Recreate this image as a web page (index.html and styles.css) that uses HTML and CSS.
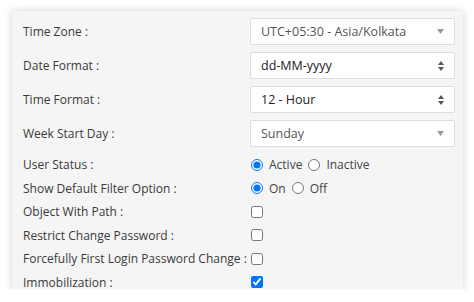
FILE: index.html
```html
<!DOCTYPE html>
<html>
<head>
<meta charset="utf-8">
<link rel="stylesheet" href="styles.css">
</head>
<body>
<div class="card">
  <div class="row sel-row">
    <div class="label">Time Zone :</div>
    <div class="select s2"><span>UTC+05:30 - Asia/Kolkata</span>
      <svg class="tri" width="7" height="5" viewBox="0 0 7 5"><path d="M0 0H7L3.5 5Z" fill="#999"/></svg></div>
  </div>
  <div class="row sel-row">
    <div class="label">Date Format :</div>
    <div class="select native"><span>dd-MM-yyyy</span>
      <svg class="dbl" width="6" height="10" viewBox="0 0 6 10"><path d="M3 0L6 4H0Z M0 6H6L3 10Z" fill="#555"/></svg></div>
  </div>
  <div class="row sel-row">
    <div class="label">Time Format :</div>
    <div class="select native"><span>12 - Hour</span>
      <svg class="dbl" width="6" height="10" viewBox="0 0 6 10"><path d="M3 0L6 4H0Z M0 6H6L3 10Z" fill="#555"/></svg></div>
  </div>
  <div class="row sel-row">
    <div class="label">Week Start Day :</div>
    <div class="select s2"><span>Sunday</span>
      <svg class="tri" width="7" height="5" viewBox="0 0 7 5"><path d="M0 0H7L3.5 5Z" fill="#999"/></svg></div>
  </div>
  <div class="row small">
    <div class="label">User Status :</div>
    <div class="opts">
      <label class="opt"><input type="radio" name="us" checked>Active</label>
      <label class="opt"><input type="radio" name="us">Inactive</label>
    </div>
  </div>
  <div class="row small">
    <div class="label">Show Default Filter Option :</div>
    <div class="opts">
      <label class="opt"><input type="radio" name="fo" checked>On</label>
      <label class="opt"><input type="radio" name="fo">Off</label>
    </div>
  </div>
  <div class="row small">
    <div class="label">Object With Path :</div>
    <div class="opts"><input type="checkbox"></div>
  </div>
  <div class="row small">
    <div class="label">Restrict Change Password :</div>
    <div class="opts"><input type="checkbox"></div>
  </div>
  <div class="row small">
    <div class="label">Forcefully First Login Password Change :</div>
    <div class="opts"><input type="checkbox"></div>
  </div>
  <div class="row small">
    <div class="label">Immobilization :</div>
    <div class="opts"><input type="checkbox" checked></div>
  </div>
</div>
</body>
</html>
```
FILE: styles.css
```css
* { box-sizing: border-box; }
html, body { margin: 0; padding: 0; background: #fff; }
body {
  font-family: "Open Sans", "Noto Sans", sans-serif;
  font-size: 12px;
  color: #333;
  padding: 11px 11px 0 12px;
}
.card {
  width: 451px;
  height: 279px;
  overflow: hidden;
  background: #f5f5f5;
  box-shadow: 0 0 8px rgba(0,0,0,0.18);
  padding: 7px 8px 0 11px;
}
.row {
  display: grid;
  grid-template-columns: 227px 1fr;
  align-items: center;
}
.sel-row { height: 27px; margin-bottom: 7px; }
.sel-row:nth-child(4) { margin-bottom: 6px; }
.small { height: 23.5px; }
.label { white-space: nowrap; color: #3a3a3a; }
.select {
  height: 27px;
  background: #fff;
  border: 1px solid #ddd;
  border-radius: 2px;
  display: flex;
  align-items: center;
  justify-content: space-between;
  padding: 0 9px 0 10px;
  font-size: 12.5px;
}
.s2 span { color: #555; }
.native span { color: #222; }
.tri { margin-right: 1px; }
.dbl { margin-right: 1px; }
.opts { display: flex; align-items: center; }
.opt { display: flex; align-items: center; margin-right: 5px; color: #444; }
input[type=radio] { margin: 0 6px 0 1px; width: 12px; height: 12px; }
input[type=checkbox] { margin: 0 0 0 1px; width: 12px; height: 12px; }
```
